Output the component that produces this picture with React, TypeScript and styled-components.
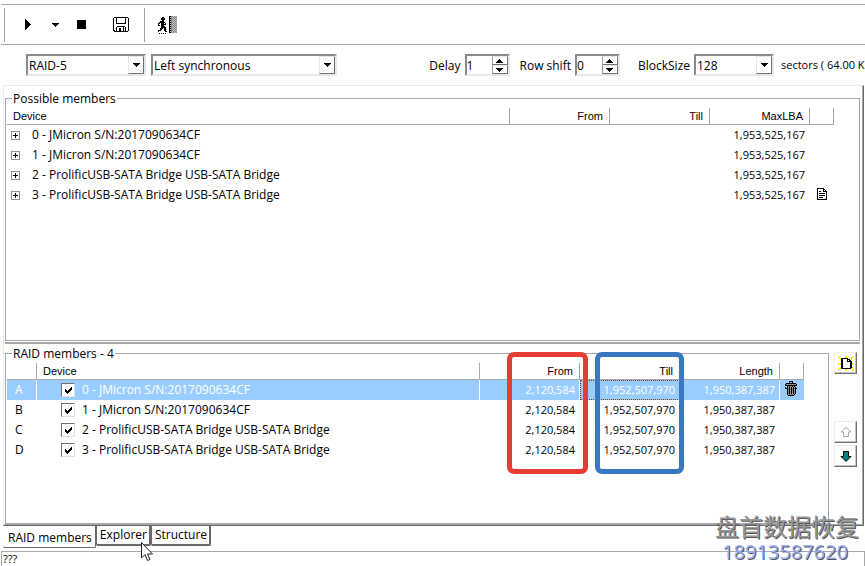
import React from 'react';
import styled, { createGlobalStyle } from 'styled-components';

const Global = createGlobalStyle`
  * { box-sizing: border-box; }
  body { margin: 0; background: #fff; }
`;

const ui = '"Open Sans", "Noto Sans", sans-serif';
const sans = '"Liberation Sans", Arial, sans-serif';

const Window = styled.main`
  position: relative;
  display: flex;
  flex-direction: column;
  min-height: 100vh;
  overflow: hidden;
  padding-top: 4px;
  font: 12px/16px ${ui};
  color: #000;
`;

const Toolbar = styled.div`
  display: flex;
  align-items: center;
  height: 41px;
  margin-left: 1px;
  padding-left: 3px;
  border-top: 1px solid #a8a8a8;
  border-bottom: 1px solid #a8a8a8;
`;

const Divider = styled.span<{ $before?: number }>`
  width: 1px;
  height: 34px;
  margin-left: ${(p) => p.$before ?? 0}px;
  background: #a0a0a0;
`;

const ToolButton = styled.button<{ $w: number }>`
  display: grid;
  place-items: center;
  width: ${(p) => p.$w}px;
  height: 32px;
  padding: 0;
  border: 0;
  background: none;
`;

const Settings = styled.form`
  display: flex;
  align-items: center;
  height: 40px;
  padding-left: 26px;
  white-space: nowrap;
`;

const Spacer = styled.span`
  flex: 1;
`;

const Label = styled.label`
  margin-right: 4px;
  padding-top: 1px;
`;

const Units = styled.span`
  width: 84px;
  font-size: 11px;
`;

const Sunken = styled.span<{ $w: number; $gap: number }>`
  display: grid;
  flex: none;
  grid-template-columns: 1fr 16px;
  width: ${(p) => p.$w}px;
  height: 22px;
  margin-right: ${(p) => p.$gap}px;
  border: 2px solid;
  border-color: #8a8a8a #e8e8e8 #e8e8e8 #8a8a8a;
`;

const Select = styled.select`
  grid-area: 1 / 1 / 2 / 3;
  appearance: none;
  min-width: 0;
  padding: 2px 0 0 1px;
  border: 0;
  border-radius: 0;
  background: #fff;
  color: #000;
  font: 12px/16px ${ui};
`;

const Arrow = styled.span`
  grid-area: 1 / 2;
  display: grid;
  place-items: center;
  background: #fff;
  border: 1px solid;
  border-color: #e8e8e8 #707070 #707070 #e8e8e8;
  pointer-events: none;
`;

const NumberBox = styled.input`
  min-width: 0;
  padding: 1px 0 0;
  border: 0;
  appearance: textfield;
  font: 12px/16px ${ui};
  &::-webkit-inner-spin-button { appearance: none; }
`;

const Steps = styled.span`
  display: grid;
  grid-template-rows: 1fr 1fr;
`;

const Step = styled.button`
  display: grid;
  place-items: center;
  padding: 0;
  background: #fff;
  border: 1px solid;
  border-color: #e8e8e8 #707070 #707070 #a0a0a0;
`;

const Page = styled.section`
  display: flex;
  flex: 1;
  flex-direction: column;
  margin: 0 1px 0 3px;
  padding: 3px 3px 0 1px;
  border: 1px solid;
  border-color: #ececec #696969 #696969 #ececec;
  box-shadow: inset -1px -1px #a8a8a8;
`;

const Group = styled.fieldset`
  position: relative;
  min-width: 0;
  margin: 0;
  padding: 1px 24px 0 1px;
  border: 1px solid #a8a8a8;
`;

const TopGroup = styled(Group)`
  flex: 1;
  padding-right: 25px;
`;

const Legend = styled.legend`
  margin-left: 5px;
  padding: 2px 1px 0;
`;

const Splitter = styled.hr`
  width: 100%;
  height: 2px;
  margin: 1px 0 0;
  border: 0;
  background: #a8a8a8;
`;

const Lower = styled.div`
  display: grid;
  grid-template-columns: 1fr 31px;
  min-height: 181px;
  padding-bottom: 1px;
`;

const Table = styled.table`
  width: 100%;
  table-layout: fixed;
  border-collapse: separate;
  border-spacing: 0;
`;

const Col = styled.col<{ $w?: number }>`
  width: ${(p) => (p.$w ? `${p.$w}px` : 'auto')};
`;

const Head = styled.th<{ $right?: boolean }>`
  height: 17px;
  padding: 0 6px;
  border-right: 1px solid #a8a8a8;
  border-bottom: 1px solid #a8a8a8;
  font: 11px/16px ${sans};
  text-align: ${(p) => (p.$right ? 'right' : 'left')};
`;

const Row = styled.tr<{ $selected?: boolean }>`
  color: ${(p) => (p.$selected ? '#fff' : '#000')};
  background: ${(p) => (p.$selected ? '#99ccff' : 'transparent')};
`;

const Cell = styled.td<{ $rule?: boolean }>`
  height: 20px;
  padding: 0 4px;
  border-right: 1px solid ${(p) => (p.$rule ? '#fff' : 'transparent')};
  white-space: nowrap;
`;

const NumberCell = styled(Cell)<{ $focus?: boolean }>`
  outline: ${(p) => (p.$focus ? '1px dotted #704010' : '0')};
  outline-offset: -1px;
  font-size: 11px;
  text-align: right;
`;

const Letter = styled(Cell)`
  padding-left: 8px;
`;

const Device = styled.span<{ $indent: number; $gap: number }>`
  display: flex;
  align-items: center;
  gap: ${(p) => p.$gap}px;
  padding-left: ${(p) => p.$indent}px;
`;

const Expand = styled.button`
  display: grid;
  place-items: center;
  width: 9px;
  height: 9px;
  padding: 0;
  border: 1px solid #909090;
  background: #fff;
`;

const CheckLabel = styled.label`
  display: flex;
  align-items: center;
  gap: 7px;
`;

const CheckBox = styled.span`
  display: grid;
  place-items: center;
  width: 14px;
  height: 14px;
  & > * { grid-area: 1 / 1; }
`;

const Check = styled.input`
  appearance: none;
  width: 14px;
  height: 14px;
  margin: 0;
  background: #fff;
  border: 1px solid;
  border-color: #707070 #e0e0e0 #e0e0e0 #707070;
  &:not(:checked) + svg { visibility: hidden; }
`;

const RowAction = styled.button<{ $left?: number }>`
  display: block;
  padding: 0 0 0 ${(p) => p.$left ?? 0}px;
  border: 0;
  background: none;
`;

const Mark = styled.span<{ $color: string; $w: number; $right: number }>`
  position: absolute;
  top: -10px;
  right: ${(p) => p.$right}px;
  width: ${(p) => p.$w}px;
  height: 122px;
  border: 5px solid ${(p) => p.$color};
  border-radius: 7px;
  pointer-events: none;
`;

const SideButtons = styled.div`
  display: flex;
  flex-direction: column;
  align-items: flex-end;
  padding: 8px 3px 0 0;
`;

const SideButton = styled.button<{ $after: number }>`
  display: grid;
  place-items: center;
  width: 23px;
  height: 22px;
  margin-bottom: ${(p) => p.$after}px;
  padding: 0;
  background: #fff;
  border: 1px solid;
  border-color: #ececec #707070 #707070 #ececec;
  box-shadow: inset -1px -1px #c4c4c4;
`;

const Tabs = styled.nav`
  display: flex;
  align-items: flex-start;
  height: 25px;
  padding-left: 3px;
`;

const Tab = styled.button<{ $active?: boolean }>`
  height: ${(p) => (p.$active ? 22 : 20)}px;
  padding: ${(p) => (p.$active ? '2px 3px 0 5px' : '0 2px 0 3px')};
  background: #fff;
  border: solid #696969;
  border-width: ${(p) => (p.$active ? '0 1px 1px 0' : '0 2px 2px 1px')};
  border-radius: 0 0 2px 2px;
  color: #000;
  font: 12px/16px ${ui};
`;

const Status = styled.footer`
  height: 15px;
  margin-left: 1px;
  padding-left: 1px;
  border: solid #a8a8a8;
  border-width: 1px 1px 0 1px;
  font: 11px/14px ${ui};
`;

const Watermark = styled.div`
  position: absolute;
  right: 6px;
  bottom: 2px;
  text-align: center;
  pointer-events: none;
`;

const WaterName = styled.div`
  color: #999;
  font: 24px/28px "Noto Sans CJK SC", sans-serif;
  text-shadow: 1px 1px #555;
`;

const WaterPhone = styled.div`
  padding-right: 4px;
  color: #9aaef8;
  font: 20px/24px ${ui};
  text-shadow: 1px 1px #555;
`;

const Pointer = styled.svg`
  position: absolute;
  left: 141px;
  bottom: 5px;
`;

type BitmapProps = { rows: string[]; colors?: Record<string, string> };
const palette: Record<string, string> = { '#': '#000', g: '#888', l: '#bbb', y: '#ffee00', w: '#fff' };

function Bitmap({ rows, colors = palette }: BitmapProps) {
  const width = Math.max(...rows.map((r) => r.length));
  return (
    <svg width={width} height={rows.length} shapeRendering="crispEdges" aria-hidden="true">
      {rows.flatMap((r, y) =>
        [...r].map((c, x) => (colors[c] ? <rect key={`${x}-${y}`} x={x} y={y} width={1} height={1} fill={colors[c]} /> : null)),
      )}
    </svg>
  );
}

const down = ['#######', ' ##### ', '  ###  ', '   #   '];
const up = [...down].reverse();
const play = ['#', '##', '###', '####', '#####', '######', '#####', '####', '###', '##', '#'];
const stop = Array(9).fill('#########');
const tick = ['      #', '     ##', '#   ###', '## ### ', '#####  ', ' ###   ', '  #    '];
const plus = ['  #  ', '  #  ', '#####', '  #  ', '  #  '];
const save = [
  ' ############## ',
  '#  #        #  #',
  '#  #        #  #',
  '#  #        #  #',
  '#  #        #  #',
  '#  #        #  #',
  '#  ##########  #',
  '#              #',
  '#              #',
  '#   ########   #',
  '#  #      # #  #',
  '#  #  ##  # #  #',
  '#  #  ##  # #  #',
  '## #  ##  # #  #',
  ' ############## ',
];
const exit = [
  '            ##gglglg',
  '     ##     #lglglgl',
  '    ####    ##gglglg',
  '    ####    #lglglgl',
  '     ##     ##gglglg',
  '   ####     #lglglgl',
  '  ######    ##gglglg',
  ' ## ### #   #lglglgl',
  ' #  #####   ##gglglg',
  ' ## ###     #lglglgl',
  '    ####    ##gglglg',
  '    #####   #lglglgl',
  '   ### ##   ##gglglg',
  '   ##  ##   #lglglgl',
  ' ###   ##   ##gglglg',
  ' #      ##  #lglglgl',
  '            ##gglglg',
  '  # # # #           ',
];
const doc = [
  '#######   ',
  '#     ##  ',
  '#     # # ',
  '# ##  ####',
  '#        #',
  '# ###### #',
  '#        #',
  '# ###### #',
  '#        #',
  '# ####   #',
  '#        #',
  '##########',
];
const trash = [
  '    ####    ',
  '    #  #    ',
  ' ########## ',
  '#gggggggggg#',
  '############',
  '  #g#gg#g#  ',
  '# #g#g#g#g# ',
  '###g#g#g#g##',
  '  #g#g#g#g# ',
  '  #g#g#g#g# ',
  '  #g#g#g#g# ',
  '  #g#g#g#g# ',
  '  #g#g#g#g# ',
  '  #gggggg#  ',
  '   ######   ',
];
const fresh = [
  'y      yy     yy',
  'yy     yy    yy ',
  ' yy#######  yy  ',
  '  y##wwww### y  ',
  '   ##wwww#w##   ',
  '   ##wwww#####  ',
  '   ##wwwwwww##  ',
  'yyy##wwwwwww##yy',
  'yyy##wwwwwww##yy',
  '   ##wwwwwww##  ',
  '   ##wwwwwww##  ',
  '  y##wwwwwww##y ',
  ' yy##########yy ',
  'yy     yy    yyy',
  'y      yy     yy',
];

const devices = [
  '0 - JMicron S/N:2017090634CF',
  '1 - JMicron S/N:2017090634CF',
  '2 - ProlificUSB-SATA Bridge USB-SATA Bridge',
  '3 - ProlificUSB-SATA Bridge USB-SATA Bridge',
];

function Combo({ id, value, width, gap, label }: { id: string; value: string; width: number; gap: number; label?: string }) {
  return (
    <Sunken $w={width} $gap={gap}>
      <Select id={id} aria-label={label} defaultValue={value}>
        <option>{value}</option>
      </Select>
      <Arrow><Bitmap rows={down} /></Arrow>
    </Sunken>
  );
}

function Spin({ id, value, gap }: { id: string; value: number; gap: number }) {
  return (
    <Sunken $w={45} $gap={gap}>
      <NumberBox id={id} type="number" defaultValue={value} />
      <Steps>
        <Step type="button" aria-label="Increase"><Bitmap rows={up} /></Step>
        <Step type="button" aria-label="Decrease"><Bitmap rows={down} /></Step>
      </Steps>
    </Sunken>
  );
}

export default function App() {
  return (
    <Window>
      <Global />
      <Toolbar>
        <Divider />
        <ToolButton $w={46} aria-label="Start"><Bitmap rows={play} /></ToolButton>
        <ToolButton $w={9} aria-label="Start options"><Bitmap rows={down} /></ToolButton>
        <ToolButton $w={42} aria-label="Stop"><Bitmap rows={stop} /></ToolButton>
        <ToolButton $w={38} aria-label="Save"><Bitmap rows={save} /></ToolButton>
        <Divider $before={4} />
        <ToolButton $w={43} aria-label="Exit"><Bitmap rows={exit} /></ToolButton>
      </Toolbar>
      <Settings>
        <Combo id="level" label="RAID level" value="RAID-5" width={120} gap={5} />
        <Combo id="order" label="Order" value="Left synchronous" width={186} gap={0} />
        <Spacer />
        <Label htmlFor="delay">Delay</Label>
        <Spin id="delay" value={1} gap={10} />
        <Label htmlFor="shift">Row shift</Label>
        <Spin id="shift" value={0} gap={18} />
        <Label htmlFor="block">BlockSize</Label>
        <Combo id="block" value="128" width={80} gap={7} />
        <Units>sectors ( 64.00 K</Units>
      </Settings>
      <Page>
        <TopGroup>
          <Legend>Possible members</Legend>
          <Table>
            <colgroup><Col /><Col $w={100} /><Col $w={100} /><Col $w={100} /><Col $w={24} /></colgroup>
            <thead>
              <tr><Head>Device</Head><Head $right>From</Head><Head $right>Till</Head><Head $right>MaxLBA</Head><Head aria-label="Report" /></tr>
            </thead>
            <tbody>
              {devices.map((d, i) => (
                <Row key={d}>
                  <Cell><Device $indent={0} $gap={12}><Expand aria-label="Expand"><Bitmap rows={plus} /></Expand>{d}</Device></Cell>
                  <Cell />
                  <Cell />
                  <NumberCell>1,953,525,167</NumberCell>
                  <Cell>{i === 3 && <RowAction $left={3} aria-label="Report"><Bitmap rows={doc} /></RowAction>}</Cell>
                </Row>
              ))}
            </tbody>
          </Table>
        </TopGroup>
        <Splitter />
        <Lower>
          <Group>
            <Legend>RAID members - 4</Legend>
            <Table>
              <colgroup><Col $w={30} /><Col /><Col $w={100} /><Col $w={100} /><Col $w={100} /><Col $w={24} /></colgroup>
              <thead>
                <tr><Head aria-label="Slot" /><Head>Device</Head><Head $right>From</Head><Head $right>Till</Head><Head $right>Length</Head><Head aria-label="Remove" /></tr>
              </thead>
              <tbody>
                {devices.map((d, i) => (
                  <Row key={d} $selected={i === 0}>
                    <Letter $rule={i === 0}>{'ABCD'[i]}</Letter>
                    <Cell $rule={i === 0}>
                      <Device $indent={20} $gap={0}>
                        <CheckLabel>
                          <CheckBox><Check type="checkbox" defaultChecked /><Bitmap rows={tick} /></CheckBox>
                          {d}
                        </CheckLabel>
                      </Device>
                    </Cell>
                    <NumberCell $rule={i === 0}>2,120,584</NumberCell>
                    <NumberCell $focus={i === 0}>1,952,507,970</NumberCell>
                    <NumberCell $rule={i === 0}>1,950,387,387</NumberCell>
                    <Cell>{i === 0 && <RowAction $left={1} aria-label="Remove"><Bitmap rows={trash} /></RowAction>}</Cell>
                  </Row>
                ))}
              </tbody>
            </Table>
            <Mark $color="#e53d35" $w={81} $right={240} />
            <Mark $color="#3878c0" $w={89} $right={144} />
          </Group>
          <SideButtons>
            <SideButton $after={47} aria-label="New member"><Bitmap rows={fresh} /></SideButton>
            <SideButton $after={2} aria-label="Move up">
              <svg width="12" height="10" aria-hidden="true"><path d="M6 .5 11 5H8.500v4.500h-5V5H1z" fill="#fff" stroke="#aaa" /></svg>
            </SideButton>
            <SideButton $after={0} aria-label="Move down">
              <svg width="12" height="11" aria-hidden="true"><path d="M6 10.500 1 5.500h2.500v-5h5v5H11z" fill="#008080" stroke="#000" /></svg>
            </SideButton>
          </SideButtons>
        </Lower>
      </Page>
      <Tabs>
        <Tab $active>RAID members</Tab>
        <Tab>Explorer</Tab>
        <Tab>Structure</Tab>
      </Tabs>
      <Status>???</Status>
      <Watermark>
        <WaterName>盘首数据恢复</WaterName>
        <WaterPhone>18913587620</WaterPhone>
      </Watermark>
      <Pointer width="12" height="19" viewBox="0 0 12 19" aria-hidden="true">
        <path d="M.5.5v15.500l3.500-3.500 2.500 6 2.500-1-2.500-5.500h5z" fill="#fff" stroke="#223" />
      </Pointer>
    </Window>
  );
}
